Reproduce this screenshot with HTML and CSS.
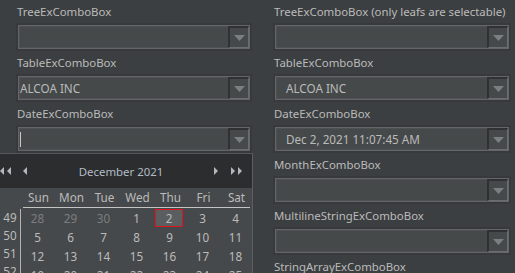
FILE: index.html
```html
<!DOCTYPE html>
<html lang="en">
<head>
  <meta charset="UTF-8">
  <title>ExComboBox demo</title>
  <link rel="stylesheet" href="styles.css">
</head>
<body>
  <div class="form">
    <div class="col">
      <div class="field">
        <label>TreeExComboBox</label>
        <div class="combo"><div class="box"><span class="value"></span><span class="btn"><svg width="11" height="6" viewBox="0 0 11 6"><polygon points="0,0 11,0 5.5,6"/></svg></span></div></div>
      </div>
      <div class="field">
        <label>TableExComboBox</label>
        <div class="combo"><div class="box"><span class="value">ALCOA INC</span><span class="btn"><svg width="11" height="6" viewBox="0 0 11 6"><polygon points="0,0 11,0 5.5,6"/></svg></span></div></div>
      </div>
      <div class="field">
        <label>DateExComboBox</label>
        <div class="combo"><div class="box"><span class="value"><i class="caret"></i></span><span class="btn"><svg width="11" height="6" viewBox="0 0 11 6"><polygon points="0,0 11,0 5.5,6"/></svg></span></div></div>
      </div>
    </div>

    <div class="col wide">
      <div class="field">
        <label>TreeExComboBox (only leafs are selectable)</label>
        <div class="combo"><div class="box"><span class="value"></span><span class="btn"><svg width="11" height="6" viewBox="0 0 11 6"><polygon points="0,0 11,0 5.5,6"/></svg></span></div></div>
      </div>
      <div class="field">
        <label>TableExComboBox</label>
        <div class="combo"><div class="box"><span class="value">ALCOA INC</span><span class="btn"><svg width="11" height="6" viewBox="0 0 11 6"><polygon points="0,0 11,0 5.5,6"/></svg></span></div></div>
      </div>
      <div class="field">
        <label>DateExComboBox</label>
        <div class="combo"><div class="box"><span class="value">Dec 2, 2021 11:07:45 AM</span><span class="btn"><svg width="11" height="6" viewBox="0 0 11 6"><polygon points="0,0 11,0 5.5,6"/></svg></span></div></div>
      </div>
      <div class="field">
        <label>MonthExComboBox</label>
        <div class="combo"><div class="box"><span class="value"></span><span class="btn"><svg width="11" height="6" viewBox="0 0 11 6"><polygon points="0,0 11,0 5.5,6"/></svg></span></div></div>
      </div>
      <div class="field">
        <label>MultilineStringExComboBox</label>
        <div class="combo"><div class="box"><span class="value"></span><span class="btn"><svg width="11" height="6" viewBox="0 0 11 6"><polygon points="0,0 11,0 5.5,6"/></svg></span></div></div>
      </div>
      <div class="field">
        <label>StringArrayExComboBox</label>
      </div>
    </div>
  </div>

  <!-- date chooser popup, opened from the left DateExComboBox -->
  <div class="popup">
    <div class="cal-head">
      <span class="nav first"><svg width="12" height="8" viewBox="0 0 12 8"><polygon points="0,4 4,0 4,8"/><polygon points="7,4 11,0 11,8"/></svg></span>
      <span class="nav prev"><svg width="5" height="8" viewBox="0 0 5 8"><polygon points="0,4 4,0 4,8"/></svg></span>
      <span class="month">December&nbsp;2021</span>
      <span class="nav next"><svg width="5" height="8" viewBox="0 0 5 8"><polygon points="0,0 4,4 0,8"/></svg></span>
      <span class="nav last"><svg width="12" height="8" viewBox="0 0 12 8"><polygon points="0,0 4,4 0,8"/><polygon points="7,0 11,4 7,8"/></svg></span>
    </div>
    <div class="cal">
      <div class="day-names">
        <span>Sun</span><span>Mon</span><span>Tue</span><span>Wed</span><span>Thu</span><span>Fri</span><span>Sat</span>
      </div>
      <div class="rule"></div>
      <div class="weeks">
        <div class="wk-col">
          <span>49</span><span>50</span><span>51</span><span>52</span>
        </div>
        <div class="dates">
          <span class="other">28</span><span class="other">29</span><span class="other">30</span><span>1</span><span class="sel">2</span><span>3</span><span>4</span>
          <span>5</span><span>6</span><span>7</span><span>8</span><span>9</span><span>10</span><span>11</span>
          <span>12</span><span>13</span><span>14</span><span>15</span><span>16</span><span>17</span><span>18</span>
          <span>19</span><span>20</span><span>21</span><span>22</span><span>23</span><span>24</span><span>25</span>
        </div>
      </div>
    </div>
  </div>
</body>
</html>
```

FILE: styles.css
```css
body {
  margin: 0;
  background-color: #3c3f41;
  color: #bbbbbb;
  font-family: 'Noto Sans', 'Open Sans', sans-serif;
  font-size: 11.4px;
  overflow: hidden;
  height: 273px;
}

.form {
  display: grid;
  grid-template-columns: 236px 238px;
  column-gap: 21px;
  padding: 0 4px 0 16px;
}

.field label {
  display: block;
  height: 23px;
  line-height: 24px;
  padding-left: 1px;
  white-space: nowrap;
}

.combo {
  height: 28px;
  box-sizing: border-box;
  padding: 2px;
  background-color: #37393b;
}

.box {
  display: flex;
  height: 100%;
  box-sizing: border-box;
  border: 1px solid #636668;
  box-shadow: inset 0 0 0 1px #4d5153;
  background-color: #45494a;
}

.value {
  flex: 1;
  display: flex;
  align-items: center;
  padding-left: 1px;
  font-size: 11.7px;
  white-space: nowrap;
}

.wide .value {
  padding-left: 10px;
}

.caret {
  display: block;
  width: 1px;
  height: 15px;
  background-color: #c8c8c8;
}

.btn {
  width: 18px;
  display: flex;
  align-items: center;
  justify-content: center;
  border-left: 2px solid #2f3133;
  border-top: 2px solid #2f3133;
  border-right: 1px solid #6b6e70;
  border-bottom: 1px solid #6b6e70;
}

.btn svg {
  fill: #7c7f81;
}

/* popup */

.popup {
  position: absolute;
  left: 0;
  top: 153px;
  bottom: 0;
  width: 252px;
  overflow: hidden;
  border-top: 1px solid #55585a;
  border-right: 1px solid #5c5f61;
  background-color: #46494b;
}

.cal-head {
  display: flex;
  align-items: center;
  height: 34px;
  background-color: #2b2d2e;
}

.nav {
  display: flex;
}

.nav svg {
  fill: #b5b8ba;
}

.prev {
  margin-left: 11px;
}

.next {
  margin-right: 12px;
}

.last {
  margin-right: 9px;
}

.month {
  flex: 1;
  text-align: center;
  font-size: 11.4px;
  color: #b3bcc5;
}

.day-names {
  display: grid;
  grid-template-columns: repeat(7, 33px);
  margin-left: 22px;
  height: 19px;
  line-height: 19px;
  text-align: center;
  font-size: 11.7px;
}

.rule {
  height: 1px;
  margin: 0 2px 0 23px;
  background-color: #c4c4c4;
}

.weeks {
  display: flex;
}

.wk-col {
  width: 21px;
  border-right: 1px solid #b4b4b4;
  margin-top: 1px;
  display: flex;
  flex-direction: column;
}

.wk-col span {
  height: 19px;
  line-height: 19px;
  text-align: center;
  font-size: 11.7px;
  margin-top: -1px;
}

.dates {
  display: grid;
  grid-template-columns: repeat(7, 33px);
  grid-auto-rows: 19px;
  padding-top: 1px;
}

.dates span {
  line-height: 18px;
  text-align: center;
  font-size: 11.7px;
}

.dates .other {
  color: #7b7e81;
}

.dates .sel {
  margin: 0 3px 1px 2px;
  line-height: 16px;
  border: 1px solid #e0141b;
  background-color: #5a5e60;
}
```
